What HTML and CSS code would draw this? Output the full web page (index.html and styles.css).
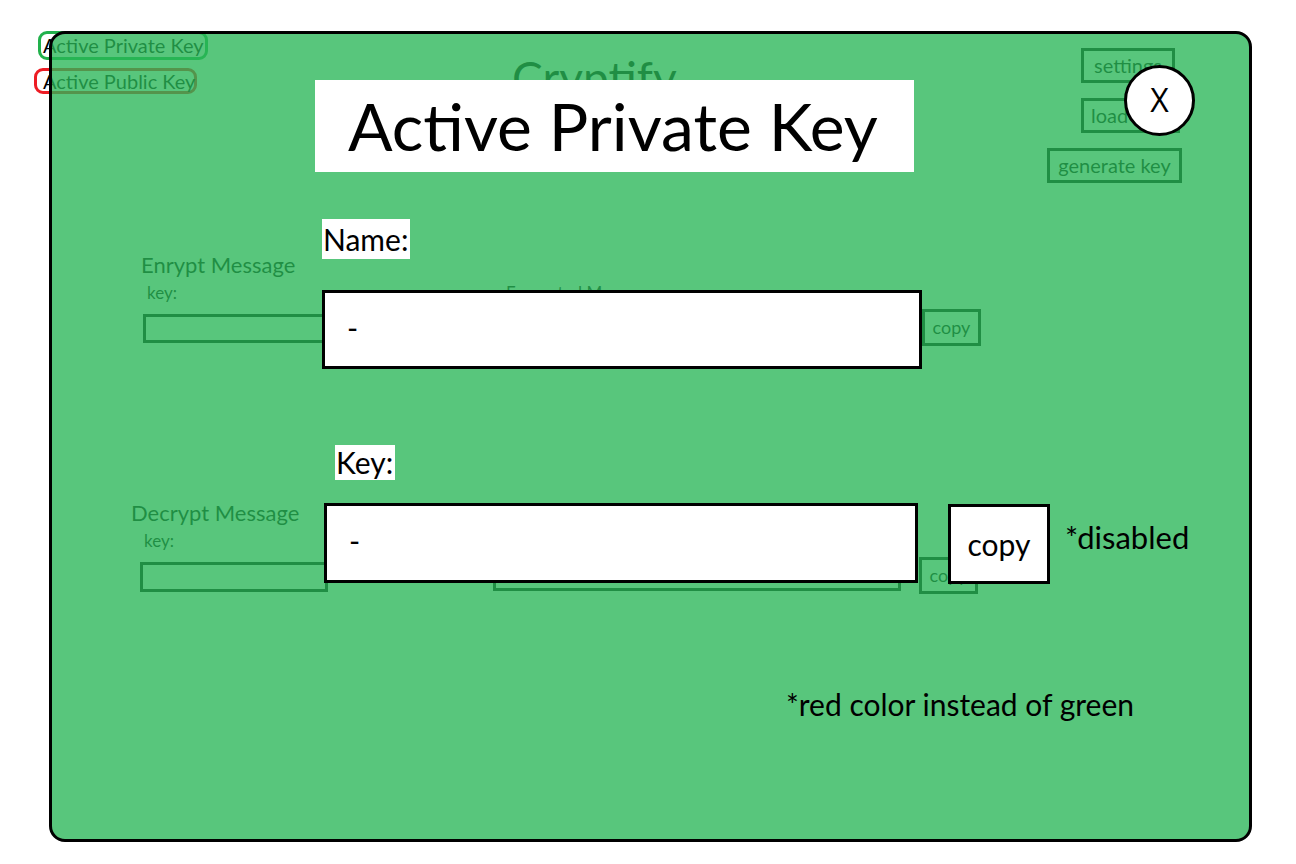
FILE: index.html
```html
<!DOCTYPE html>
<html lang="en">
<head>
<meta charset="utf-8">
<title>Cryptify - Active Private Key</title>
<link rel="stylesheet" href="styles.css">
</head>
<body>
<div class="app">
  <header class="top">
    <div class="tabs">
      <div class="tab tab-private">Active Private Key</div>
      <div class="tab tab-public">Active Public Key</div>
    </div>
    <h1 class="brand">Cryptify</h1>
    <nav class="actions">
      <div class="btn btn-settings">settings</div>
      <div class="btn btn-load">load</div>
      <div class="btn btn-generate">generate key</div>
    </nav>
  </header>

  <section class="sec sec-enc">
    <h2 class="sec-title">Enrypt Message</h2>
    <div class="row">
      <div class="field field-key">
        <span class="lab">key:</span>
        <div class="box box-key"></div>
      </div>
      <div class="field field-out">
        <span class="lab">Encrypted Message</span>
        <div class="box box-wide"></div>
      </div>
      <div class="cbtn">copy</div>
    </div>
  </section>

  <section class="sec sec-dec">
    <h2 class="sec-title">Decrypt Message</h2>
    <div class="row">
      <div class="field field-key">
        <span class="lab">key:</span>
        <div class="box box-key"></div>
      </div>
      <div class="field field-out">
        <div class="box box-wide"></div>
      </div>
      <div class="cbtn">copy</div>
    </div>
  </section>
</div>

<div class="overlay">
  <div class="close">X</div>
  <div class="modal">
    <div class="m-title">Active Private Key</div>
    <div class="m-label m-label-name">Name:</div>
    <div class="m-field m-field-name">-</div>
    <div class="m-label m-label-key">Key:</div>
    <div class="m-row">
      <div class="m-field m-field-key">-</div>
      <div class="m-copy">copy</div>
      <div class="m-note-inline">*disabled</div>
    </div>
    <div class="m-note">*red color instead of green</div>
  </div>
</div>
</body>
</html>
```

FILE: styles.css
```css
* { box-sizing: border-box; }

html, body {
  margin: 0;
  padding: 0;
}

body {
  width: 1296px;
  height: 864px;
  overflow: hidden;
  background: #ffffff;
  font-family: Lato, "Open Sans", "Liberation Sans", sans-serif;
  color: #000;
  position: relative;
}

/* ---------- underlying app ---------- */
.top {
  display: flex;
  align-items: flex-start;
}

.tabs {
  display: flex;
  flex-direction: column;
  align-items: flex-start;
  gap: 8px;
  padding: 31px 0 0 34px;
  width: 512px;
  flex-shrink: 0;
}

.tab {
  font-size: 20px;
  line-height: 23px;
  border: 3px solid;
  border-radius: 9px;
  white-space: nowrap;
}

.tab-private {
  border-color: #22b14c;
  margin-left: 4px;
  width: 170px;
  height: 29px;
  padding: 0 0 0 2px;
}

.tab-public {
  border-color: #ed1c24;
  width: 163px;
  height: 26px;
  padding: 0 0 0 6px;
  line-height: 21px;
}

.brand {
  margin: 50px 0 0 0;
  font-size: 46px;
  line-height: 55px;
  font-weight: 400;
  white-space: nowrap;
}

.actions {
  margin-left: auto;
  margin-right: 114px;
  padding-top: 48px;
  display: flex;
  flex-direction: column;
  align-items: flex-end;
  gap: 15px;
}

.btn {
  border: 3px solid #000;
  height: 35px;
  font-size: 20px;
  line-height: 28px;
  text-align: center;
  white-space: nowrap;
}

.btn-settings { width: 94px; margin-right: 7px; }
.btn-load { width: 99px; margin-right: 2px; text-align: left; padding-left: 7px; }
.btn-generate { width: 135px; }

.sec { display: flex; flex-direction: column; align-items: flex-start; }

.sec-title {
  margin: 0;
  font-size: 22px;
  line-height: 26px;
  font-weight: 400;
  white-space: nowrap;
}

.sec-enc { margin-top: 69px; padding-left: 141px; }
.sec-dec { margin-top: 157px; padding-left: 131px; }

.row {
  display: flex;
  align-items: flex-end;
  margin-top: 5px;
}

.field { display: flex; flex-direction: column; align-items: flex-start; }

.lab {
  font-size: 17px;
  line-height: 20px;
  margin-bottom: 11px;
  white-space: nowrap;
}

.box { border: 3px solid #000; }

.sec-enc .field-key { margin-left: 2px; }
.sec-enc .field-key .lab { padding-left: 4px; }
.sec-enc .box-key { width: 187px; height: 29px; }
.sec-enc .field-out { margin-left: 163px; }
.sec-enc .field-out .lab { padding-left: 13px; }
.sec-enc .box-wide { width: 407px; height: 29px; }
.sec-enc .cbtn { margin-left: 22px; margin-bottom: -3px; }

.sec-dec .field-key { margin-left: 9px; }
.sec-dec .field-key .lab { padding-left: 4px; }
.sec-dec .box-key { width: 188px; height: 30px; }
.sec-dec .field-out { margin-left: 165px; margin-bottom: 1px; }
.sec-dec .box-wide { width: 408px; height: 31px; }
.sec-dec .cbtn { margin-left: 18px; margin-bottom: -2px; }

.cbtn {
  border: 3px solid #000;
  width: 59px;
  height: 37px;
  font-size: 18px;
  line-height: 31px;
  text-align: center;
}

/* ---------- translucent green backdrop + modal ---------- */
.overlay {
  position: absolute;
  left: 49px;
  top: 31px;
  width: 1203px;
  height: 811px;
  border: 3px solid #000;
  border-radius: 16px;
  background: rgba(41, 182, 87, 0.78);
}

.close {
  position: absolute;
  left: 1072px;
  top: 31px;
  width: 71px;
  height: 71px;
  border: 3px solid #000;
  border-radius: 50%;
  background: #fff;
  font-size: 32px;
  line-height: 63px;
  text-align: center;
  font-family: "Open Sans", Lato, sans-serif;
}

.modal {
  display: flex;
  flex-direction: column;
  align-items: flex-start;
  padding: 46px 0 0 263px;
}

.m-title {
  width: 599px;
  height: 92px;
  background: #fff;
  font-size: 66px;
  line-height: 92px;
  padding-left: 33px;
  white-space: nowrap;
}

.m-label {
  background: #fff;
  font-size: 30px;
  white-space: nowrap;
}

.m-label-name {
  margin: 47px 0 0 7px;
  height: 40px;
  line-height: 40px;
  padding: 0 2px 0 1px;
}

.m-label-key {
  margin: 76px 0 0 20px;
  height: 35px;
  line-height: 35px;
  padding: 0 2px 0 1px;
}

.m-field {
  background: #fff;
  border: 3px solid #000;
  font-size: 30px;
  padding-left: 22px;
}

.m-field-name {
  margin: 31px 0 0 7px;
  width: 600px;
  height: 79px;
  line-height: 68px;
}

.m-row {
  display: flex;
  align-items: flex-start;
  margin: 23px 0 0 9px;
}

.m-field-key {
  width: 594px;
  height: 80px;
  line-height: 68px;
}

.m-copy {
  margin-left: 30px;
  margin-top: 1px;
  width: 102px;
  height: 80px;
  background: #fff;
  border: 3px solid #000;
  font-size: 30px;
  line-height: 74px;
  text-align: center;
}

.m-note-inline {
  margin-left: 15px;
  margin-top: 15px;
  font-size: 31px;
  line-height: 38px;
  white-space: nowrap;
}

.m-note {
  margin: 101px 0 0 471px;
  font-size: 30px;
  line-height: 38px;
  white-space: nowrap;
}
```
